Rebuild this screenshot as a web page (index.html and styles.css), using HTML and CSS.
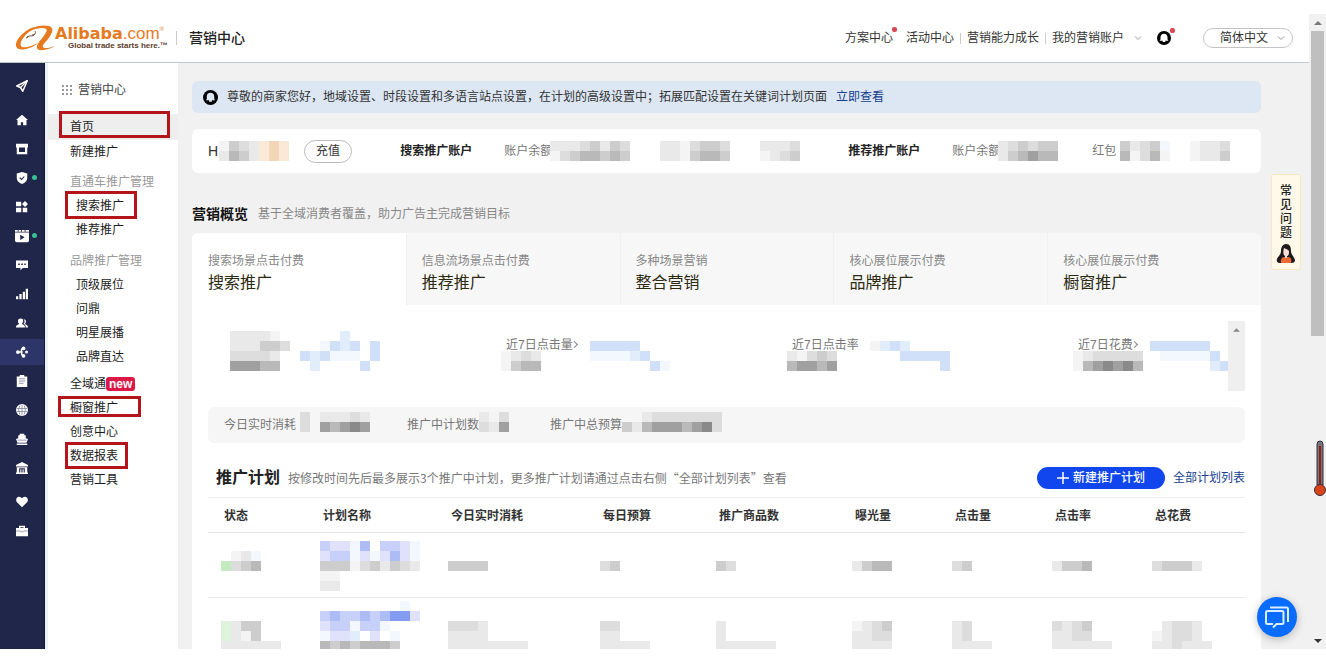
FILE: index.html
```html
<!DOCTYPE html>
<html lang="zh-CN">
<head>
<meta charset="utf-8">
<meta name="viewport" content="width=device-width, initial-scale=1">
<title>营销中心</title>
<link rel="stylesheet" href="styles.css">
</head>
<body>
<div class="window">
  <div class="page">
    <header class="topbar">
      <a class="logo" href="#">
        <svg class="logo-mark" viewBox="0 0 40 26" aria-hidden="true">
          <path d="M20 2C10 4 0 15 1 21c1 6 14 4 22-3-6 3-15 6-17 3-2-4 4-12 12-17z" fill="#e67a1f"/>
          <path d="M10 9C15 2 26-1 34 1c6 2 3 8-1 13-3 4-6 6-5 8 1 2 7 1 12-1-6 4-17 6-18 2-1-4 5-9 8-14 3-4 2-6-3-6-6 0-11 2-17 6z" fill="#e67a1f"/>
          <path d="M12 12c3-2 6 0 8-3M17 10c3 0 4-2 3-4M11 13l2-1" fill="none" stroke="#6b4528" stroke-width="1"/>
        </svg>
        <span class="logo-text">
          <span class="logo-name"><b>Alibaba</b>.com<sup>®</sup></span>
          <span class="logo-tag">Global trade starts here.™</span>
        </span>
      </a>
      <h1 class="app-title">营销中心</h1>
      <nav class="topnav">
        <a class="plan dot" href="#">方案中心</a>
        <a href="#">活动中心</a>
        <a class="sep" href="#">营销能力成长</a>
        <a class="sep" href="#">我的营销账户</a>
        <svg class="chev" viewBox="0 0 8 8" aria-hidden="true"><path d="M1 2.500l3 3 3-3"/></svg>
      </nav>
      <button class="bell dot" type="button" aria-label="通知">
        <svg viewBox="0 0 16 16"><circle cx="8" cy="8" r="8" fill="#000"/><path d="M8 3c2.500 0 4 1.800 4 4v2.500l1 1.500H3l1-1.500V7c0-2.200 1.500-4 4-4zM6.500 11h3v1.500h-3z" fill="#fff"/></svg>
      </button>
      <button class="lang" type="button">简体中文
        <svg class="chev" viewBox="0 0 8 8" aria-hidden="true"><path d="M1 2.500l3 3 3-3"/></svg>
      </button>
    </header>

    <div class="workspace">
      <nav class="rail" aria-label="主导航">
        <a href="#" aria-label="导航"><svg viewBox="0 0 16 16"><path d="M15 1L1 8l5 2 3 5z" fill="none" stroke="#fff" stroke-width="2" stroke-linejoin="round"/><path d="M15 1L6 10" stroke="#fff" stroke-width="1.500"/></svg></a>
        <a class="apart" href="#" aria-label="首页"><svg viewBox="0 0 16 16"><path d="M8 1l8 7h-2v7H9.500v-4h-3v4H2V8H0z"/></svg></a>
        <a href="#" aria-label="店铺"><svg viewBox="0 0 16 16"><path d="M0 1h16v5h-1v9H1V6H0zm4 5v6h8V6z" fill-rule="evenodd"/></svg></a>
        <a class="live" href="#" aria-label="保障"><svg viewBox="0 0 16 16"><path d="M8 0l7 2v6c0 4-3 6.500-7 8-4-1.500-7-4-7-8V2z"/><path d="M5 7.500l2.500 2.500L11 6" fill="none" stroke="#20254a" stroke-width="1.500"/></svg></a>
        <a href="#" aria-label="应用"><svg viewBox="0 0 16 16"><path d="M0 1h7v6H0zM12 0l4 4-4 4-4-4zM0 9h7v6H0zM9 9h6v6H9z"/></svg></a>
        <a class="live wide" href="#" aria-label="视频"><svg viewBox="0 0 16 16"><path d="M0 1h16v2H0zM0 4h16v9q0 2-2 2H2q-2 0-2-2z"/><path d="M6 6.500l5 3-5 3zM3 1h1v2H3zM7 1h1v2H7zM11 1h1v2h-1z" fill="#20254a"/></svg></a>
        <a href="#" aria-label="消息"><svg viewBox="0 0 16 16"><path d="M0 2h16v10H9l-3 3v-3H0z"/><path d="M3 6h2v2H3zM7 6h2v2H7zM11 6h2v2h-2z" fill="#20254a"/></svg></a>
        <a href="#" aria-label="数据"><svg viewBox="0 0 16 16"><path d="M0 11h3v4H0zM4.500 8h3v7h-3zM9 5h3v10H9zM13 1h3v14h-3z"/></svg></a>
        <a href="#" aria-label="客户"><svg viewBox="0 0 16 16"><path d="M6 2c5 0 4 5 2 7 1 2 4 1 4 5H0c0-4 3-3 4-5-2-2-2-7 2-7z"/><path d="M10 3c4 0 4 4 2 6 1 2 4 1 4 5h-3c0-4-2-4-3-5 2-2 2-4 0-6z"/></svg></a>
        <a class="current" href="#" aria-label="营销"><svg viewBox="0 0 16 16"><path d="M3 8h5M11 3c-5 0-4 4-3 5-1 2-1 5 3 5" fill="none" stroke="#fff" stroke-width="2"/><circle cx="2.500" cy="8" r="2.500"/><circle cx="10" cy="3" r="2.500"/><circle cx="10" cy="13" r="2.500"/><circle cx="14" cy="8" r="2"/></svg></a>
        <a href="#" aria-label="订单"><svg viewBox="0 0 16 16"><path d="M1 2h4V0h6v2h4v14H1z"/><path d="M4 5h8M4 8h8M4 11h6" stroke="#6f7390"/></svg></a>
        <a href="#" aria-label="国际"><svg viewBox="0 0 16 16"><circle cx="8" cy="8" r="8"/><path d="M1 6h14M1 10h14M8 1v14M5 2q-3 6 0 12M11 2q3 6 0 12" fill="none" stroke="#7b7f99"/></svg></a>
        <a href="#" aria-label="物流"><svg viewBox="0 0 16 16"><path d="M5 1h6v2h2v4l3 1-2 5H2L0 8l3-1V3h2zM1 14h14v2H1z"/><path d="M2 9.500h12" stroke="#7b7f99"/></svg></a>
        <a href="#" aria-label="金融"><svg viewBox="0 0 16 16"><path d="M8 0l8 4v2H0V4zM1 7h14v7h1v2H0v-2h1z"/><path d="M5 14V9h6v5M8 9v5" fill="none" stroke="#20254a" stroke-width="1.500"/></svg></a>
        <a class="apart" href="#" aria-label="收藏"><svg viewBox="0 0 16 16"><path d="M8 15L1 8C-1 5 1 1 4 1c2 0 3 1 4 2 1-1 2-2 4-2 3 0 5 4 3 7z"/></svg></a>
        <a href="#" aria-label="工具"><svg viewBox="0 0 16 16"><path d="M0 4h4V1h8v3h4v11H0zm6 0h4V3H6z" fill-rule="evenodd"/><path d="M0 8h6M10 8h6M6 9h4" stroke="#7b7f99"/></svg></a>
      </nav>

      <nav class="menu" aria-label="营销中心">
        <div class="menu-title">
          <svg viewBox="0 0 11 11" aria-hidden="true"><path d="M0 1h2M4 1h2M8 1h2M0 5h2M4 5h2M8 5h2M0 9h2M4 9h2M8 9h2" stroke="#999" stroke-width="2"/></svg>营销中心
        </div>
        <a class="item home mark" href="#">首页</a>
        <a class="item" href="#">新建推广</a>
        <div class="item label">直通车推广管理</div>
        <a class="item sub mark" href="#">搜索推广</a>
        <a class="item sub" href="#">推荐推广</a>
        <div class="item label brand">品牌推广管理</div>
        <a class="item sub" href="#">顶级展位</a>
        <a class="item sub" href="#">问鼎</a>
        <a class="item sub" href="#">明星展播</a>
        <a class="item sub" href="#">品牌直达</a>
        <a class="item global" href="#">全域通<span class="new">new</span></a>
        <a class="item showcase mark" href="#">橱窗推广</a>
        <a class="item" href="#">创意中心</a>
        <a class="item report mark" href="#">数据报表</a>
        <a class="item" href="#">营销工具</a>
      </nav>

      <main class="content">
        <div class="notice">
          <svg viewBox="0 0 16 16" aria-hidden="true"><circle cx="8" cy="8" r="8"/><path d="M8 3c2.500 0 4 1.800 4 4v2.500l1 1.500H3l1-1.500V7c0-2.200 1.500-4 4-4zM6.500 11h3v1.500h-3z" fill="#dce7f3"/></svg>
          <span>尊敬的商家您好，地域设置、时段设置和多语言站点设置，在计划的高级设置中；拓展匹配设置在关键词计划页面</span>
          <a href="#">立即查看</a>
        </div>

        <section class="account">
          <div class="user">H<svg class="mosaic" data-cells="adcbpqp/bedbpqp"></svg></div>
          <button class="recharge" type="button">充值</button>
          <strong>搜索推广账户</strong>
          <div class="balance">账户余额<svg class="mosaic" data-cells="bbbcdbdc/acdeeded"></svg></div>
          <svg class="mosaic bonus" data-cells="bbacddc/bbadeed"></svg>
          <svg class="mosaic coupon" data-cells="bbbc/abcd"></svg>
          <strong class="feed">推荐推广账户</strong>
          <div class="balance">账户余额<svg class="mosaic" data-cells="bcdcdd/bdefee"></svg></div>
          <div class="packet">红包<svg class="mosaic" data-cells="dbcds/eacea"></svg></div>
          <svg class="mosaic rest" data-cells="abbc/abbd"></svg>
        </section>

        <div class="heading"><h2>营销概览</h2><span>基于全域消费者覆盖，助力广告主完成营销目标</span></div>

        <section class="overview">
          <div class="tabs" role="tablist">
            <button type="button" role="tab" aria-selected="true"><small>搜索场景点击付费</small>搜索推广</button>
            <button type="button" role="tab" aria-selected="false"><small>信息流场景点击付费</small>推荐推广</button>
            <button type="button" role="tab" aria-selected="false"><small>多种场景营销</small>整合营销</button>
            <button type="button" role="tab" aria-selected="false"><small>核心展位展示付费</small>品牌推广</button>
            <button type="button" role="tab" aria-selected="false"><small>核心展位展示付费</small>橱窗推广</button>
          </div>

          <div class="metrics">
            <div class="metric">
              <svg class="mosaic value first" data-cells="bbbba./bbbddc/ccccb./fffee."></svg>
              <svg class="mosaic trend first" data-cells="....u.../..svuv.v/vuvsss.v/.u....v."></svg>
            </div>
            <div class="metric">近7日点击量<i></i>
              <svg class="mosaic value" data-cells="abcb/adee"></svg>
              <svg class="mosaic trend" data-cells="vvvvv.../ssssuv../......vs"></svg>
            </div>
            <div class="metric">近7日点击率
              <svg class="mosaic value" data-cells="bacdc/effef"></svg>
              <svg class="mosaic trend rate" data-cells="auvu..../...vvvvv/.......v"></svg>
            </div>
            <div class="metric">近7日花费<i></i>
              <svg class="mosaic value" data-cells="abccccc/aefgfge"></svg>
              <svg class="mosaic trend last" data-cells="vvvvvv../.sssssv./......uv"></svg>
            </div>
            <div class="inner-scroll"><svg viewBox="0 0 8 4" aria-hidden="true"><path d="M0 4l4-4 4 4z"/></svg></div>
          </div>

          <div class="stats">
            <div>今日实时消耗<svg class="mosaic" data-cells="c.bbbcb/c.fefgf"></svg></div>
            <div class="count">推广中计划数<svg class="mosaic" data-cells="bac/cbf"></svg></div>
            <div class="budget">推广中总预算<svg class="mosaic" data-cells="..bccccccc/dbefffefgc"></svg></div>
          </div>

          <div class="plan-head">
            <h2>推广计划</h2>
            <p>按修改时间先后最多展示3个推广中计划，更多推广计划请通过点击右侧“全部计划列表”查看</p>
            <button class="create" type="button"><svg viewBox="0 0 12 12" aria-hidden="true"><path d="M6 0v12M0 6h12"/></svg>新建推广计划</button>
            <a href="#">全部计划列表</a>
          </div>

          <table class="plans">
            <colgroup><col class="w-state"><col class="w-name"><col class="w-cost"><col class="w-day"><col class="w-goods"><col class="w-num"><col class="w-num"><col class="w-num"><col class="w-total"></colgroup>
            <thead><tr><th>状态</th><th>计划名称</th><th>今日实时消耗</th><th>每日预算</th><th>推广商品数</th><th>曝光量</th><th>点击量</th><th>点击率</th><th>总花费</th></tr></thead>
            <tbody>
              <tr>
                <td><svg class="mosaic" data-cells="..../.abs/ncde/..../...."></svg></td>
                <td><svg class="mosaic" data-cells="yxxsz.yyxs/xyysxsxzxs/dddacdbdcb/aa......../bb........"></svg></td>
                <td><svg class="mosaic" data-cells="..../..../dddd/..../...."></svg></td>
                <td><svg class="mosaic" data-cells="../../cd/../.."></svg></td>
                <td><svg class="mosaic" data-cells="../../dc/../.."></svg></td>
                <td><svg class="mosaic" data-cells="..../..../bdee/..../...."></svg></td>
                <td><svg class="mosaic" data-cells="../../cd/../.."></svg></td>
                <td><svg class="mosaic" data-cells="..../..../bdde/..../...."></svg></td>
                <td><svg class="mosaic" data-cells="...../...../cdddb/...../....."></svg></td>
              </tr>
              <tr>
                <td><svg class="mosaic" data-cells="....../....../mbdd../mbad../bbbbbb"></svg></td>
                <td><svg class="mosaic" data-cells="........s./yzyyzyzZZx/xyysyys.../sxxu.x.s../ededeeed.."></svg></td>
                <td><svg class="mosaic" data-cells="......../......../cccb..../bbbb..../bbbbbbbb"></svg></td>
                <td><svg class="mosaic" data-cells="...../...../cc.../bb.../bbbbb"></svg></td>
                <td><svg class="mosaic" data-cells="....../....../b...../b...../bbbbbb"></svg></td>
                <td><svg class="mosaic" data-cells="..../..../abcd/bbcc/bbbb"></svg></td>
                <td><svg class="mosaic" data-cells="..../..../bc../bc../bbbb"></svg></td>
                <td><svg class="mosaic" data-cells="....../....../cbcd../bbcc../bbbbbb"></svg></td>
                <td><svg class="mosaic" data-cells="....../....../.bccb./abccb./bbcbbb"></svg></td>
              </tr>
            </tbody>
          </table>
        </section>

        <a class="faq" href="#"><span>常见问题</span>
          <svg viewBox="0 0 20 20" aria-hidden="true"><path d="M10 0c4 0 5 3 5 7s3 5 4 9c0 3-3 3-5 3H5c-3 0-5-1-4-4 1-3 4-4 4-8 0-4 2-7 5-7z" fill="#1d1a1d"/><path d="M5 19c-1-5 2-6 4-6h3c3 0 4 3 3 6z" fill="#ed6a34"/><path d="M8 4c3 2 5 1 5 4s-1 4-2 4v2H9v-2c-2-1-2-5-1-8z" fill="#f8ded6"/></svg>
        </a>
        <button class="chat" type="button" aria-label="在线客服">
          <svg viewBox="0 0 24 24"><path d="M5 2.500h16.500q1.500 0 1.500 1.500v13M2.500 6H17q1.500 0 1.500 1.500v10q0 1.500-1.500 1.500h-5.500L8 22.500M8 19H2.500Q1 19 1 17.500v-10Q1 6 2.500 6"/></svg>
        </button>
      </main>
    </div>
  </div>

  <div class="scrollbar" aria-hidden="true">
    <svg class="up" viewBox="0 0 8 4"><path d="M0 4l4-4 4 4z"/></svg>
    <div class="thumb"></div>
    <svg class="down" viewBox="0 0 8 4"><path d="M0 0l4 4 4-4z"/></svg>
    <svg class="thermo" viewBox="0 0 13 57"><path d="M4 4a3 3 0 0 1 6 0v41H4z" fill="#777" stroke="#303046"/><path d="M6 6h2v40H6z" fill="#8c1f1a"/><circle cx="7" cy="50" r="5.500" fill="#d9431c" stroke="#40303c"/></svg>
  </div>
</div>
<script src="mosaic.js"></script>
</body>
</html>
```

FILE: styles.css
```css
*, *::before, *::after { box-sizing: border-box; }

body {
  margin: 0;
  background: #fff;
  color: #333;
  font-family: "Liberation Sans", "Noto Sans CJK SC", sans-serif;
  font-size: 12px;
  line-height: 18px;
}

a { color: inherit; text-decoration: none; }
button { font: inherit; color: inherit; cursor: pointer; }
h1, h2, p { margin: 0; }
svg { display: block; flex: none; }
.mosaic { shape-rendering: crispEdges; }

.window { display: flex; height: 100vh; padding: 14px 0; overflow: hidden; }
.page { flex: 1; min-width: 0; display: flex; flex-direction: column; }

/* Top bar */
.topbar {
  display: flex;
  align-items: center;
  height: 49px;
  padding: 0 16px 0 15px;
  border-bottom: 1px solid #bfc6cc;
  white-space: nowrap;
}
.logo { display: flex; align-items: center; }
.logo-mark { width: 40px; height: 26px; }
.logo-text { display: flex; flex-direction: column; }
.logo-name { color: #e67a1f; font-size: 17px; line-height: 16px; }
.logo-name b { font-family: "DejaVu Sans", sans-serif; font-size: 16px; }
.logo-name sup { font-size: 6px; line-height: 6px; vertical-align: top; }
.logo-tag { padding-left: 13px; color: #5d3d2c; font-size: 8px; font-weight: bold; line-height: 8px; }
.app-title {
  margin-left: 8px;
  padding-left: 12px;
  border-left: 1px solid #ccc;
  color: #222;
  font-size: 14px;
  font-weight: 500;
  line-height: 14px;
}
.topnav { display: flex; align-items: center; gap: 13px; margin-left: auto; }
.sep { position: relative; }
.sep::before { content: ""; position: absolute; left: -7px; top: 4px; height: 11px; border-left: 1px solid #ccc; }
.chev { width: 8px; height: 8px; fill: none; stroke: #999; }
.topnav .chev { margin-left: -3px; }
.dot { position: relative; }
.dot::after {
  content: "";
  position: absolute;
  top: -3px;
  right: -4px;
  width: 5px;
  height: 5px;
  border-radius: 2px;
  background: #d8474f;
}
.plan::after { top: -2px; }
.bell { margin-left: 15px; padding: 0; border: 0; background: none; }
.bell svg { width: 14px; height: 14px; }
.lang {
  display: flex;
  align-items: center;
  gap: 9px;
  height: 20px;
  margin-left: 32px;
  padding: 0 7px 0 16px;
  border: 1px solid #c4c4c4;
  border-radius: 10px;
  background: #fff;
}

/* Icon rail */
.workspace { flex: 1; min-height: 0; display: flex; }
.rail {
  flex: none;
  display: flex;
  flex-direction: column;
  gap: 3px;
  width: 45px;
  padding-top: 10px;
  background: #20254a;
  border-right: 1px solid #151937;
}
.rail a { position: relative; display: grid; place-items: center; height: 26px; }
.rail .apart { margin-top: 5px; }
.rail svg { width: 12px; height: 12px; fill: #fff; }
.rail .wide svg { width: 14px; height: 14px; }
.rail .current { background: #2e3568; }
.live::after {
  content: "";
  position: absolute;
  right: 7px;
  top: 10px;
  width: 5px;
  height: 5px;
  border-radius: 50%;
  background: #39bf94;
}

/* Side menu */
.menu { flex: none; width: 133px; padding-top: 3px; border-left: 3px solid #eef1f6; color: #1c1c1c; }
.menu-title { display: flex; align-items: center; gap: 5px; height: 48px; padding-left: 14px; color: #444; }
.menu-title svg { width: 11px; height: 11px; }
.item { position: relative; display: block; height: 24px; padding-left: 22px; line-height: 24px; }
.home { height: 26px; line-height: 26px; background: #eee; }
.sub { padding-left: 28px; }
.label { margin-top: 6px; color: #999; }
.brand { margin-top: 7px; }
.global { display: flex; align-items: center; margin-top: 3px; }
.new { padding: 0 3px; border-radius: 3px; background: #dc1846; color: #fff; font-size: 12px; font-weight: bold; line-height: 14px; }
.mark::after {
  content: "";
  position: absolute;
  top: -3px;
  bottom: -1px;
  left: 17px;
  width: 72px;
  border: 3px solid #b4151b;
}
.home::after { left: 11px; width: 111px; top: -3px; bottom: 2px; }
.showcase::after { left: 10px; width: 83px; top: 0; bottom: 3px; }
.report::after { width: 63px; top: -2px; }

/* Content */
.content {
  position: relative;
  flex: 1;
  min-width: 0;
  display: flex;
  flex-direction: column;
  overflow: hidden;
  padding: 18px 48px 0 14px;
  background: #f1f1f1;
}
.content > * { flex: none; }
.notice {
  display: flex;
  align-items: center;
  gap: 9px;
  height: 32px;
  padding-left: 11px;
  border-radius: 6px;
  background: #dce7f3;
}
.notice svg { width: 15px; height: 15px; }
.notice a { color: #173e8c; }

.account {
  display: flex;
  align-items: center;
  height: 44px;
  margin-top: 16px;
  padding-left: 16px;
  border-radius: 6px;
  background: #fff;
  white-space: nowrap;
}
.account strong { margin-left: 48px; color: #222; font-weight: 700; }
.user { display: flex; align-items: center; gap: 1px; font-size: 14px; }
.recharge { width: 48px; height: 23px; margin-left: 15px; padding: 0; border: 1px solid #bbb; border-radius: 12px; background: #fff; }
.balance { display: flex; align-items: center; margin-left: 32px; color: #777; }
.balance .mosaic { margin-left: -2px; }
.bonus { margin-left: 30px; }
.coupon { margin-left: 30px; }
.packet { display: flex; align-items: center; gap: 4px; margin-left: 34px; color: #777; }
.rest { margin-left: 20px; }

.heading { display: flex; align-items: center; gap: 10px; height: 20px; margin-top: 31px; color: #888; }
.heading h2 { color: #111; font-size: 14px; line-height: 20px; }

.overview { margin-top: 9px; border-radius: 6px; background: #fff; overflow: hidden; }
.tabs { display: grid; grid-template-columns: repeat(5, 1fr); }
.tabs button {
  padding: 19px 15px 9px;
  border: 0;
  border-left: 1px solid #f0f0f0;
  background: #f7f7f7;
  color: #2c2a10;
  font-size: 16px;
  line-height: 26px;
  text-align: left;
}
.tabs [aria-selected="true"] { border-color: #fff; background: #fff; }
.tabs small { display: block; color: #888; font-size: 12px; line-height: 18px; }

.metrics { position: relative; display: flex; justify-content: space-between; height: 70px; margin: 16px 16px 0; padding: 15px 17px 0 12px; }
.metric { position: relative; width: 150px; color: #777; }
.metric i { display: inline-block; width: 5px; height: 5px; margin: 0 0 2px -1px; border: solid #888; border-width: 1px 1px 0 0; transform: rotate(45deg); }
.metric .value { position: absolute; left: -5px; top: 15px; }
.metric .trend { position: absolute; left: 84px; top: 5px; }
.metric .value.first { left: 10px; top: -5px; }
.metric .trend.first { left: 80px; top: -5px; }
.metric .trend.rate { left: 78px; }
.metric .trend.last { left: 72px; }
.inner-scroll { position: absolute; top: 0; right: 0; bottom: 0; width: 17px; padding: 7px 5px; background: #efefef; }
.inner-scroll svg { width: 7px; height: 4px; fill: #888; }

.stats { display: flex; height: 36px; margin: 16px 16px 0; padding-left: 16px; border-radius: 6px; background: #f6f6f6; color: #777; }
.stats div { display: flex; align-items: center; width: 183px; }
.stats .count { width: 143px; }
.stats .budget { width: auto; }
.stats .mosaic { margin: 0 0 6px 4px; }
.stats .count .mosaic, .stats .budget .mosaic { margin-left: 0; }

.plan-head { display: flex; align-items: center; gap: 8px; height: 54px; padding: 16px 16px 0 24px; color: #777; }
.plan-head h2 { color: #222; font-size: 16px; }
.plan-head p { flex: 1; font-family: "Noto Sans CJK SC", sans-serif; }
.plan-head a { color: #213f8f; }
.create { display: flex; align-items: center; gap: 4px; height: 22px; padding: 0 20px; border: 0; border-radius: 11px; background: #1146ef; color: #fff; font-weight: 500; }
.create svg { width: 12px; height: 12px; fill: none; stroke: #fff; stroke-width: 1.5; }

.plans { width: calc(100% - 32px); margin: 0 16px; border-collapse: collapse; table-layout: fixed; border-top: 1px solid #eee; }
.plans th { height: 35px; padding: 2px 0 0 16px; border-bottom: 1px solid #e2e2e2; color: #333; font-weight: 700; text-align: left; }
.plans td { padding: 8px 0 6px 13px; border-bottom: 1px solid #e8e8e8; }
.plans tr + tr td { padding-top: 3px; }
.w-state { width: 99px; }
.w-name { width: 128px; }
.w-cost { width: 152px; }
.w-day { width: 116px; }
.w-goods { width: 136px; }
.w-num { width: 100px; }
.w-total { width: 106px; }

/* Floating helpers */
.faq {
  position: absolute;
  top: 111px;
  right: 8px;
  display: flex;
  flex-direction: column;
  align-items: center;
  gap: 4px;
  width: 30px;
  padding: 9px 0 5px;
  border: 1px solid #fae7bd;
  border-radius: 3px;
  background: #fff9ea;
  color: #222;
  font-weight: 500;
}
.faq span { width: 12px; line-height: 14px; }
.faq svg { width: 20px; height: 20px; }
.chat {
  position: absolute;
  right: 12px;
  bottom: 12px;
  display: grid;
  place-items: center;
  width: 40px;
  height: 40px;
  padding: 0;
  border: 0;
  border-radius: 50%;
  background: #0a6cff;
  box-shadow: 0 2px 8px rgba(0, 0, 0, .25);
}
.chat svg { width: 24px; height: 24px; fill: none; stroke: #d8f0ff; stroke-width: 2; }

/* Window scrollbar */
.scrollbar { position: relative; flex: none; display: flex; flex-direction: column; align-items: center; width: 17px; background: #f1f1f1; }
.scrollbar .up, .scrollbar .down { width: 8px; height: 4px; margin: 7px 0 6px; fill: #777; }
.scrollbar .down { margin-top: auto; fill: #333; }
.thumb { width: 13px; height: 48%; background: #bfbfbf; }
.thermo { position: absolute; right: 0; top: 426px; width: 13px; height: 57px; }
```

FILE: mosaic.js
```js
// Fills each redacted area with 10px cells. Rows are split by "/", "." is empty.
const palette = {
  a: '#f5f4f4', b: '#e9e9e9', c: '#dddddd', d: '#cdcdcd', e: '#b9b9b9', f: '#a0a0a0', g: '#8a8a8a',
  p: '#fbe9d8', q: '#f3d6b8', s: '#f3f8ff', u: '#e2edfc', v: '#cfe0f8',
  x: '#e0e2fb', y: '#c6d0f8', z: '#aebcf6', Z: '#839cf2', n: '#c4ebbf', m: '#dff4dc'
};
document.querySelectorAll('.mosaic').forEach(svg => {
  const rows = svg.dataset.cells.split('/');
  const columns = Math.max(...rows.map(row => row.length));
  svg.setAttribute('width', columns * 10);
  svg.setAttribute('height', rows.length * 10);
  svg.setAttribute('aria-hidden', 'true');
  rows.forEach((row, y) => [...row].forEach((key, x) => {
    if (!palette[key]) return;
    const cell = document.createElementNS('http://www.w3.org/2000/svg', 'rect');
    cell.setAttribute('x', x * 10);
    cell.setAttribute('y', y * 10);
    cell.setAttribute('width', 10);
    cell.setAttribute('height', 10);
    cell.setAttribute('fill', palette[key]);
    svg.appendChild(cell);
  }));
});
```
